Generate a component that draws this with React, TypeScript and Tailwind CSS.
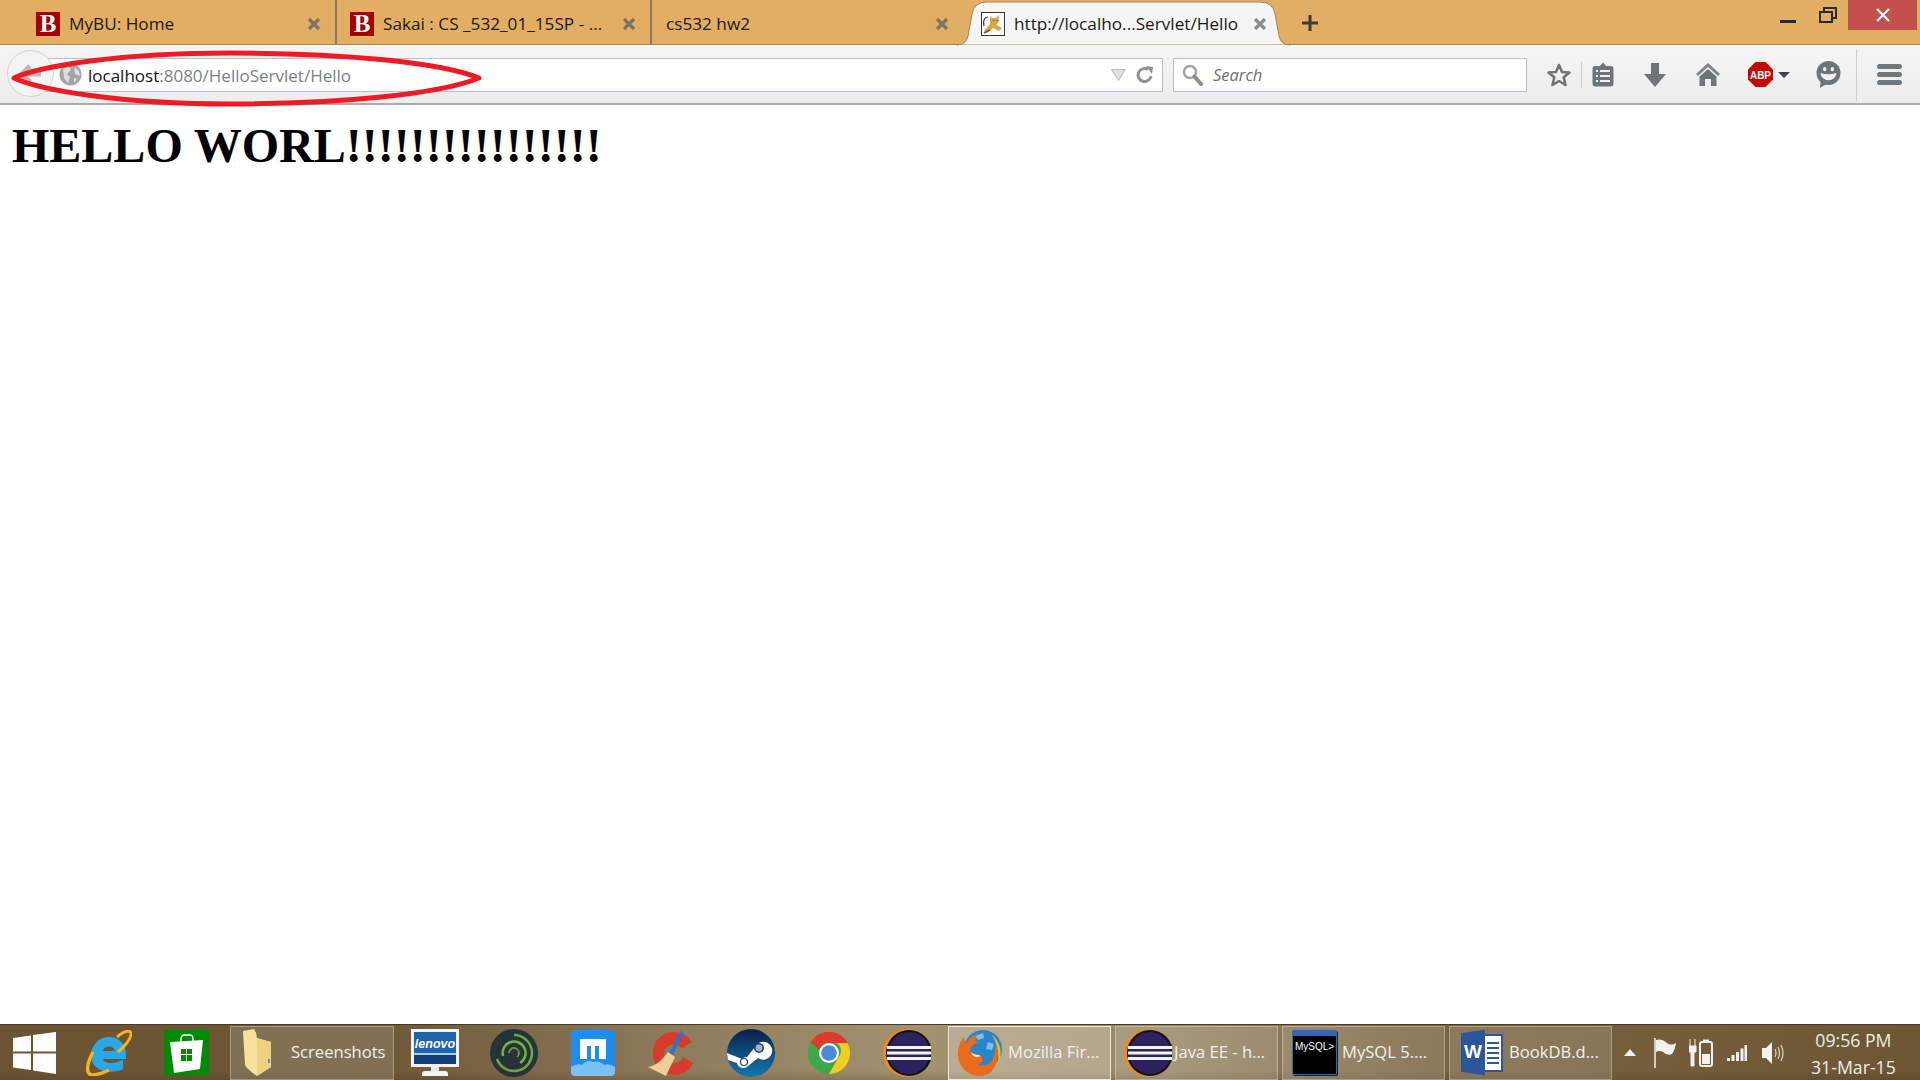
import React from "react";

const BFav = () => (
  <div className="w-6 h-6 shrink-0 bg-[#a30000] flex items-center justify-center text-white font-bold text-[25px] leading-none font-['Liberation_Serif',serif]">B</div>
);
const TabX = ({ c = "#7b7466" }: { c?: string }) => (
  <svg width="14" height="14" viewBox="0 0 14 14" className="shrink-0">
    <path d="M2 2 L12 12 M12 2 L2 12" stroke={c} strokeWidth="3.2" />
  </svg>
);
const Tomcat = () => (
  <svg width="24" height="24" viewBox="0 0 24 24" className="shrink-0">
    <rect x="0.5" y="0.5" width="23" height="23" fill="#fff" stroke="#333" />
    <path d="M9 4 L11 6 L15 6 L17.5 3 L18 9 L15.5 13 L21 16 L18 19 L12 16 L6 21 L3 19 L9 12 Z" fill="#d9a648" />
    <path d="M3 14 C1.5 8 4 5 7 5" fill="none" stroke="#333" strokeWidth="1.2" />
    <path d="M3 21 L9 18" stroke="#555" strokeWidth="1.5" />
    <path d="M12.5 8.5 H13.5 M15.5 8.5 H16.5" stroke="#4a3a1a" strokeWidth="1" />
  </svg>
);

const Back = () => (
  <div className="absolute left-[7px] top-[50px] w-[47px] h-[47px] rounded-full bg-[#f4f4f4] border border-[#d4d4d4] flex items-center justify-center">
    <svg width="24" height="20" viewBox="0 0 24 20"><path d="M11 2 L3 10 L11 18 M3 10 H22" fill="none" stroke="#b9b9b9" strokeWidth="5" /></svg>
  </div>
);
const Globe = () => (
  <svg width="23" height="23" viewBox="0 0 23 23" className="shrink-0">
    <circle cx="11.5" cy="11.5" r="11" fill="#a4a4a4" />
    <path d="M4 6 L10 3 L12 7 L8 11 L11 14 L9 20 L5 15 Z M15 4 L20 8 L21 13 L16 11 Z M15 15 L18 16 L15 20 Z" fill="#dedede" />
  </svg>
);
const Search = () => (
  <svg width="21" height="22" viewBox="0 0 21 22" className="shrink-0">
    <circle cx="8" cy="8" r="6" fill="none" stroke="#a5a5a5" strokeWidth="2.5" />
    <path d="M12.5 12.5 L19 20" stroke="#8f8f8f" strokeWidth="4" strokeLinecap="round" />
  </svg>
);
const g = "#6f7479";
const Star = () => (
  <svg width="26" height="26" viewBox="0 0 26 26"><path d="M13 3 L16 10 L23.5 10.5 L17.7 15.3 L19.5 23 L13 19 L6.5 23 L8.3 15.3 L2.5 10.5 L10 10 Z" fill="none" stroke={g} strokeWidth="2.6" strokeLinejoin="round" /></svg>
);
const Clip = () => (
  <svg width="22" height="25" viewBox="0 0 22 25">
    <path d="M3 4 H8 L11 0.5 L14 4 H19 Q21.5 4 21.5 7 V21 Q21.5 24.5 19 24.5 H3 Q0.5 24.5 0.5 21 V7 Q0.5 4 3 4 Z" fill={g} />
    <path d="M4 9 H6 M8 9 H18 M4 14 H6 M8 14 H18 M4 19 H6 M8 19 H18" stroke="#f2f2f2" strokeWidth="2" />
  </svg>
);
const Down = () => (
  <svg width="22" height="24" viewBox="0 0 22 24"><path d="M7 0 H15 V11 H22 L11 24 L0 11 H7 Z" fill={g} /></svg>
);
const Home = () => (
  <svg width="24" height="23" viewBox="0 0 24 23">
    <path d="M12 0 L24 11 L22 13 L12 4 L2 13 L0 11 Z" fill="#7f8488" />
    <path d="M12 6 L20.5 13.5 V23 H15 V16 H9 V23 H3.5 V13.5 Z" fill={g} />
  </svg>
);
const Abp = () => (
  <svg width="25" height="25" viewBox="0 0 25 25">
    <path d="M7.5 0 H17.5 L25 7.5 V17.5 L17.5 25 H7.5 L0 17.5 V7.5 Z" fill="#c90707" />
    <text x="12.5" y="16.5" textAnchor="middle" fontSize="11" fontWeight="700" fill="#fff" fontFamily="Liberation Sans, sans-serif" textLength="21" lengthAdjust="spacingAndGlyphs">ABP</text>
  </svg>
);
const Smile = () => (
  <svg width="25" height="27" viewBox="0 0 26 28">
    <circle cx="13" cy="12.5" r="12.5" fill={g} />
    <path d="M5 21 L4 28 L11 24 Z" fill={g} />
    <ellipse cx="9" cy="8.5" rx="1.7" ry="2.2" fill="#f2f2f2" />
    <ellipse cx="17" cy="8.5" rx="1.7" ry="2.2" fill="#f2f2f2" />
    <path d="M4.5 12.5 Q13 15 21.5 12.5 Q20 20 13 20 Q6 20 4.5 12.5 Z" fill="#f2f2f2" />
  </svg>
);

const WinLogo = () => (
  <svg width="43" height="42" viewBox="0 0 43 42"><path d="M0 6 L18 3.5 V19.5 H0 Z M20 3 L43 0 V19.5 H20 Z M0 21.5 H18 V38 L0 35.5 Z M20 21.5 H43 V42 L20 38.5 Z" fill="#fff" /></svg>
);
const IE = () => (
  <svg width="46" height="46" viewBox="0 0 46 46">
    <path d="M23 7 C33 7 40 14 40 25 V29 H17 C18 33 25 35 37 30 V39 C24 45 5 41 5 26 C5 15 13 7 23 7 Z M17 21 H29 C28 15 18 15 17 21 Z" fill="#2aa8e6" />
    <path d="M31 7 C38 1 45 -1 45 4 C45 9 38 17 32 22" fill="none" stroke="#f3b519" strokeWidth="3" />
    <path d="M7 22 C0 35 0 44 6 45 C11 45 17 43 23 40" fill="none" stroke="#f3b519" strokeWidth="3.4" />
  </svg>
);
const Store = () => (
  <svg width="45" height="45" viewBox="0 0 45 45">
    <rect width="45" height="45" fill="#008a00" />
    <path d="M17 15 V9 Q17 5 21 5 H26 Q29 5 29 9 V15" fill="none" stroke="#fff" strokeWidth="1.4" />
    <path d="M6 12 L39 10 L36 39 L10 43 Z" fill="#fff" />
    <path d="M17 19 H22 V24 H17 Z M23 19 H28 V24 H23 Z M17 25 H22 V31 H17 Z M23 25 H28 V31 H23 Z" fill="#008a00" />
  </svg>
);
const Folder = () => (
  <svg width="30" height="48" viewBox="0 0 30 48">
    <path d="M3 2 L14 8 V46 L4 38 Z" fill="#e6c76c" />
    <path d="M1 2 L12 0 Q15 4 15 9 L29 13 V38 L15 47 Q7 42 3 36 Z" fill="#f6e29c" />
    <path d="M15 10 V47 L29 38 V13 Z" fill="#eed282" />
    <path d="M27 30 V34" stroke="#5a8fc7" strokeWidth="2" />
  </svg>
);
const Lenovo = () => (
  <div className="w-[48px] h-[48px] shrink-0 flex flex-col items-center">
    <div className="w-full h-[38px] border-[3px] border-[#f2f2f2] bg-[#1f64a6] flex flex-col overflow-hidden">
      <span className="text-white text-[12.5px] font-bold italic leading-[14px] mt-[5px] text-center font-['Liberation_Sans',sans-serif]">lenovo</span>
      <div className="flex-1 mt-[2px] bg-[#0e3f78] border-t-2 border-[#a9cfe6]" />
    </div>
    <div className="w-[8px] h-[4px] bg-[#e8e8e8]" />
    <div className="w-[26px] h-[5px] bg-[#f4f4f4] rounded-t-[3px]" />
  </div>
);
const Ring = () => (
  <svg width="48" height="48" viewBox="0 0 48 48">
    <circle cx="24" cy="24" r="24" fill="#25333a" />
    <path d="M24 6 A18 18 0 1 1 7 30" fill="none" stroke="#74a63b" strokeWidth="2.5" />
    <path d="M13 27 A11.5 11.5 0 1 1 30 34" fill="none" stroke="#7ab03e" strokeWidth="2.5" />
    <path d="M19 24 A5 5 0 1 1 27 28" fill="none" stroke="#6d9a3a" strokeWidth="1.8" />
  </svg>
);
const Maxthon = () => (
  <svg width="44" height="46" viewBox="0 0 44 46">
    <rect width="44" height="46" rx="4" fill="#1d8df0" />
    <path d="M9 9 H35 V29 H28 V16 H24 V29 H20 V16 H16 V29 H9 Z" fill="#fff" />
    <path d="M0 37 Q6 33 11 35 Q16 29 22 32 Q29 30 33 35 Q38 33 44 37 V42 Q44 46 40 46 H4 Q0 46 0 42 Z" fill="#7cc0f6" />
  </svg>
);
const CCleaner = () => (
  <svg width="48" height="46" viewBox="0 0 48 46">
    <path d="M44 12 C36 -2 12 -2 6 16 C2 30 10 44 26 45 C36 45 42 40 45 33 L35 27 C31 35 21 36 17 29 C13 20 21 9 34 18 Z" fill="#d83a2c" />
    <path d="M34 2 L22 26" stroke="#2d73c8" strokeWidth="4" />
    <path d="M20 22 L27 27 L18 46 L0 37 C8 36 14 30 20 22 Z" fill="#efcf98" />
  </svg>
);
const Steam = () => (
  <svg width="48" height="48" viewBox="0 0 48 48">
    <defs><linearGradient id="st" x1="0" y1="0" x2="0" y2="1"><stop offset="0" stopColor="#0a1f48" /><stop offset="1" stopColor="#1379ae" /></linearGradient></defs>
    <circle cx="24" cy="24" r="24" fill="url(#st)" />
    <path d="M0 24 L15 30 A6 6 0 0 1 20 28 L28 18 A9 9 0 1 1 31 29 L21 37 A6.5 6.5 0 0 1 10 34 L1 31 Z" fill="#fff" />
    <circle cx="32" cy="19" r="5" fill="#1b3f6e" /><circle cx="32" cy="19" r="3.4" fill="#fff" opacity=".6" />
    <circle cx="17" cy="33" r="3.5" fill="none" stroke="#1b3f6e" strokeWidth="1.2" />
  </svg>
);
const Chrome = () => (
  <svg width="42" height="42" viewBox="0 0 42 42">
    <circle cx="21" cy="21" r="21" fill="#3ba84b" />
    <path d="M3 10 A21 21 0 0 1 39.5 11 H21 A10 10 0 0 0 11.5 18 Z" fill="#db3a2f" />
    <path d="M39.5 11 A21 21 0 0 1 21 42 L30 26 A10 10 0 0 0 29 11 Z" fill="#f5cc20" />
    <circle cx="21" cy="21" r="10" fill="#fff" /><circle cx="21" cy="21" r="7.8" fill="#4a8bd8" />
  </svg>
);
const Eclipse = () => (
  <svg width="48" height="48" viewBox="0 0 48 48">
    <circle cx="24" cy="24" r="24" fill="#f08a1a" />
    <circle cx="26" cy="24" r="23" fill="#111" />
    <circle cx="26" cy="24" r="21" fill="#2c2260" />
    <path d="M4 18.5 H48 M4 24 H48 M4 29.5 H48" stroke="#f4f4f4" strokeWidth="2.8" />
  </svg>
);
const Firefox = () => (
  <svg width="44" height="46" viewBox="0 0 44 46">
    <circle cx="25" cy="19" r="19" fill="#2a86cc" />
    <path d="M30 12 L36 14 L34 20 L28 19 Z M17 6 L25 3 L26 8 L20 10 Z" fill="#7bc0e8" />
    <path d="M38 14 C43 26 38 46 22 46 C9 46 0 36 0 24 C0 17 2 11 6 7 C6 10 7 12 9 13 C11 8 15 5 20 4 C16 8 17 11 20 13 C14 14 11 18 13 22 C15 25 20 24 23 26 C27 30 24 34 19 34 C26 38 34 34 36 26 C37 22 38 18 38 14 Z" fill="#ea6a1e" />
    <path d="M34 5 C42 11 46 24 39 35 C42 26 40 14 34 5 Z" fill="#f6b821" />
    <path d="M13 22 C15 25 20 24 23 26 C19 28 14 27 13 22 Z" fill="#fbe3c0" />
  </svg>
);
const MySql = () => (
  <div className="w-[45px] h-[45px] shrink-0 bg-[#2d6cb0] rounded-[2px] p-[1px] pt-[6px] flex shadow-[1px_1px_0_#123]">
    <div className="flex-1 bg-black text-white text-[10px] leading-none pt-[6px] pl-[2px] overflow-hidden whitespace-nowrap font-['Liberation_Sans',sans-serif]">MySQL&gt;</div>
  </div>
);
const Word = () => (
  <div className="relative w-[42px] h-[46px] shrink-0">
    <div className="absolute right-0 top-[4px] w-[30px] h-[38px] bg-white border-2 border-[#2b579a] flex flex-col justify-center gap-[3px] pl-[12px] pr-[2px]">
      <div className="h-[2px] bg-[#2b579a]" /><div className="h-[2px] bg-[#2b579a]" /><div className="h-[2px] bg-[#2b579a]" /><div className="h-[2px] bg-[#2b579a]" /><div className="h-[2px] bg-[#2b579a]" />
    </div>
    <div className="absolute left-0 top-0 w-[24px] h-[46px] bg-[#2b579a] [clip-path:polygon(0_8%,100%_0,100%_100%,0_92%)] flex items-center justify-center text-white font-bold text-[19px] font-['Liberation_Sans',sans-serif]">W</div>
  </div>
);

const TaskBtn = ({ icon, label, ml, active, pl, gap, w = "w-[163px]" }: { icon: React.ReactNode; label: string; ml: string; active?: boolean; pl: string; gap: string; w?: string }) => (
  <div className={`h-[54px] shrink-0 flex items-center border text-[16.6px] text-[#f4f1ea] whitespace-nowrap ${w} ${ml} ${pl} ${gap} ${active ? "bg-white/25 border-[#efeadf]" : "bg-white/15 border-white/30"}`}>
    {icon}
    <span>{label}</span>
  </div>
);

export default function App() {
  return (
    <div className="relative h-screen w-full flex flex-col bg-white overflow-hidden font-['Open_Sans',sans-serif]">
      {/* tabs */}
      <div className="h-[45px] shrink-0 bg-[#e2ae64] border-b border-[#a08756] flex relative text-[17.2px] text-[#1c1a14]">
        <div className="w-[337px] shrink-0 border-r-2 border-[#8b7b5c] pl-[36px] pr-[14px] pt-[3px] flex items-center gap-[9px]">
          <BFav /><span className="flex-1 whitespace-nowrap">MyBU: Home</span><TabX />
        </div>
        <div className="w-[315px] shrink-0 border-r-2 border-[#8b7b5c] pl-[13px] pr-[14px] pt-[3px] flex items-center gap-[9px]">
          <BFav /><span className="flex-1 whitespace-nowrap">Sakai : CS _532_01_15SP - ...</span><TabX />
        </div>
        <div className="w-[305px] shrink-0 pl-[14px] pr-[8px] pt-[3px] flex items-center">
          <span className="flex-1 whitespace-nowrap">cs532 hw2</span><TabX />
        </div>
        <div className="relative w-[333px] h-[45px] shrink-0 z-10 pl-[24px] pr-[23px] pt-[3px] flex items-center gap-[9px]">
          <svg className="absolute left-0 top-0 -z-10" width="333" height="46" viewBox="0 0 333 46">
            <path d="M0 45 Q9 45 11 36 L15 14 Q17 2 30 2 H303 Q316 2 318 14 L322 36 Q324 45 333 45 Z" fill="#f5f5f5" stroke="#a08756" strokeWidth="1" />
            <path d="M1 46 H332" stroke="#f5f5f5" strokeWidth="2" />
          </svg>
          <Tomcat /><span className="flex-1 whitespace-nowrap">http://localho...Servlet/Hello</span><TabX c="#8a8f94" />
        </div>
        <svg width="16" height="16" viewBox="0 0 16 16" className="ml-[12px] mt-[15px]"><path d="M8 0 V16 M0 8 H16" stroke="#3c3a34" strokeWidth="3" /></svg>
        <div className="flex-1" />
        <div className="flex items-start">
          <div className="w-[16px] h-[3px] mt-[20px] bg-[#2a2a2a] mr-[23px]" />
          <div className="relative w-[18px] h-[16px] mt-[7px] mr-[11px]">
            <div className="absolute right-0 top-0 w-[14px] h-[12px] border-2 border-[#2a2a2a]" />
            <div className="absolute left-0 bottom-0 w-[14px] h-[12px] border-2 border-[#2a2a2a] bg-[#e2ae64]" />
          </div>
          <div className="w-[69px] h-[30px] bg-[#c4504e] flex items-center justify-center mr-[3px]">
            <svg width="14" height="14" viewBox="0 0 14 14"><path d="M1 1 L13 13 M13 1 L1 13" stroke="#fff" strokeWidth="2.2" /></svg>
          </div>
        </div>
      </div>

      {/* toolbar */}
      <div className="h-[60px] shrink-0 bg-gradient-to-b from-[#f5f5f5] to-[#ededed] border-b-2 border-[#aaaaaa] flex items-center pl-[40px] pt-[1px] text-[17px]">
        <div className="w-[1123px] h-[34px] shrink-0 bg-white border border-[#b9c0c9] flex items-center pl-[18px] pr-[8px]">
          <Globe />
          <div className="flex-1 ml-[6px] pt-[2px] whitespace-nowrap"><span className="text-[#111]">localhost</span><span className="text-[#7b7f86]">:8080/HelloServlet/Hello</span></div>
          <svg width="15" height="12" viewBox="0 0 15 12"><path d="M0.5 0.5 H14.5 L7.5 11.5 Z" fill="#dce1e6" stroke="#b3bac2" /></svg>
          <svg width="18" height="18" viewBox="0 0 18 18" className="ml-[10px]"><path d="M15 10 A6.5 6.5 0 1 1 12 3.5" fill="none" stroke="#8b9299" strokeWidth="3" /><path d="M10 0 L17 1 L16 8 Z" fill="#8b9299" /></svg>
        </div>
        <div className="w-[354px] h-[34px] ml-[10px] shrink-0 bg-white border border-[#b9c0c9] flex items-center pl-[8px] gap-[10px] text-[#6e6e6e] italic text-[16.5px]">
          <Search /><span className="pt-[2px]">Search</span>
        </div>
        <div className="ml-[19px] flex items-center"><Star /></div>
        <div className="w-px h-[26px] bg-[#c9c9c9] ml-[9px]" />
        <div className="ml-[10px]"><Clip /></div>
        <div className="ml-[30px]"><Down /></div>
        <div className="ml-[30px]"><Home /></div>
        <div className="ml-[28px]"><Abp /></div>
        <div className="ml-[5px] w-0 h-0 border-x-[6px] border-x-transparent border-t-[6px] border-t-[#3f4347]" />
        <div className="ml-[26px]"><Smile /></div>
        <div className="w-px h-[52px] bg-[#cfcfcf] ml-[15px]" />
        <div className="ml-[20px] w-[25px] flex flex-col gap-[3px]">
          <div className="h-[5px] rounded-sm bg-[#73787d]" /><div className="h-[5px] rounded-sm bg-[#73787d]" /><div className="h-[5px] rounded-sm bg-[#73787d]" />
        </div>
      </div>
      <Back />

      {/* page */}
      <main className="flex-1 pl-[12px] pt-[13px]">
        <h1 className="text-[48px] leading-[56px] font-bold text-black whitespace-nowrap font-['Liberation_Serif',serif]">HELLO WORL!!!!!!!!!!!!!!!!</h1>
      </main>

      {/* taskbar */}
      <div className="h-[56px] shrink-0 flex items-center bg-[linear-gradient(to_bottom,transparent_82%,rgba(60,40,20,0.2)),linear-gradient(to_right,#6a5432_0%,#6e5837_20%,#8e7b5b_35%,#a39270_48%,#9a8968_60%,#7a6441_74%,#6c5633_100%)] border-t border-[#4a3a22] pl-[13px]">
        <WinLogo />
        <div className="ml-[30px]"><IE /></div>
        <div className="ml-[32px]"><Store /></div>
        <TaskBtn w="w-[164px]" ml="ml-[21px]" pl="pl-[11px]" gap="gap-[19px]" icon={<Folder />} label="Screenshots" />
        <div className="ml-[17px]"><Lenovo /></div>
        <div className="ml-[31px]"><Ring /></div>
        <div className="ml-[33px]"><Maxthon /></div>
        <div className="ml-[33px]"><CCleaner /></div>
        <div className="ml-[31px]"><Steam /></div>
        <div className="ml-[33px]"><Chrome /></div>
        <div className="ml-[33px]"><Eclipse /></div>
        <TaskBtn ml="ml-[17px]" pl="pl-[9px]" gap="gap-[6px]" active icon={<Firefox />} label="Mozilla Fir..." />
        <TaskBtn ml="ml-[4px]" pl="pl-[8px]" gap="gap-[2px]" icon={<Eclipse />} label="Java EE - h..." />
        <TaskBtn ml="ml-[4px]" pl="pl-[9px]" gap="gap-[5px]" icon={<MySql />} label="MySQL 5...." />
        <TaskBtn ml="ml-[4px]" pl="pl-[11px]" gap="gap-[6px]" icon={<Word />} label="BookDB.d..." />
        <div className="ml-[12px] w-0 h-0 border-x-[6px] border-x-transparent border-b-[7px] border-b-[#f1eee6]" />
        <svg width="22" height="30" viewBox="0 0 22 30" className="ml-[18px]"><path d="M1 0 V30" stroke="#f4f1ea" strokeWidth="1.5" /><path d="M2 2 Q8 0 13 5 Q17 8 22 5 Q21 12 18 16 Q13 18 9 14 Q5 12 2 14 Z" fill="#f4f1ea" /></svg>
        <svg width="24" height="28" viewBox="0 0 24 28" className="ml-[13px]">
          <path d="M1 0 V7 M6 0 V7 M0 7 H7 V13 H5 V27 H2 V13 H0 Z" fill="#f4f1ea" stroke="#f4f1ea" strokeWidth="1" />
          <rect x="11" y="3" width="12" height="24" rx="2" fill="none" stroke="#f4f1ea" strokeWidth="2" /><rect x="14" y="0.5" width="6" height="3" fill="#f4f1ea" /><rect x="13" y="15" width="8" height="10" fill="#f4f1ea" />
        </svg>
        <svg width="20" height="16" viewBox="0 0 20 16" className="ml-[14px]"><path d="M0 13 H3 V16 H0 Z M4.5 10 H7.5 V16 H4.5 Z M9 7 H12 V16 H9 Z M13.5 3.5 H16.5 V16 H13.5 Z M17.5 0 H20 V16 H17.5 Z" fill="#f4f1ea" /></svg>
        <svg width="22" height="24" viewBox="0 0 22 24" className="ml-[15px]"><path d="M0 7 H4 L10 1 V23 L4 17 H0 Z" fill="#f4f1ea" /><path d="M13 8 Q15 12 13 16 M16 6 Q19 12 16 18 M19 4 Q23 12 19 20" fill="none" stroke="#d9d4c6" strokeWidth="1.2" /></svg>
        <div className="ml-[27px] pt-[2px] flex flex-col items-center text-[17.7px] leading-[27px] text-[#f1eee6] whitespace-nowrap">
          <span>09:56 PM</span><span>31-Mar-15</span>
        </div>
      </div>

      {/* hand-drawn annotation */}
      <svg className="absolute left-0 top-0 pointer-events-none" width="500" height="110" viewBox="0 0 500 110">
        <path d="M14 78 C40 66 120 53 230 53 C340 53 440 62 479 78 C440 94 340 104 230 104 C120 104 40 90 14 78 Z" fill="none" stroke="#ed1c24" strokeWidth="5" strokeLinejoin="round" />
      </svg>
    </div>
  );
}
